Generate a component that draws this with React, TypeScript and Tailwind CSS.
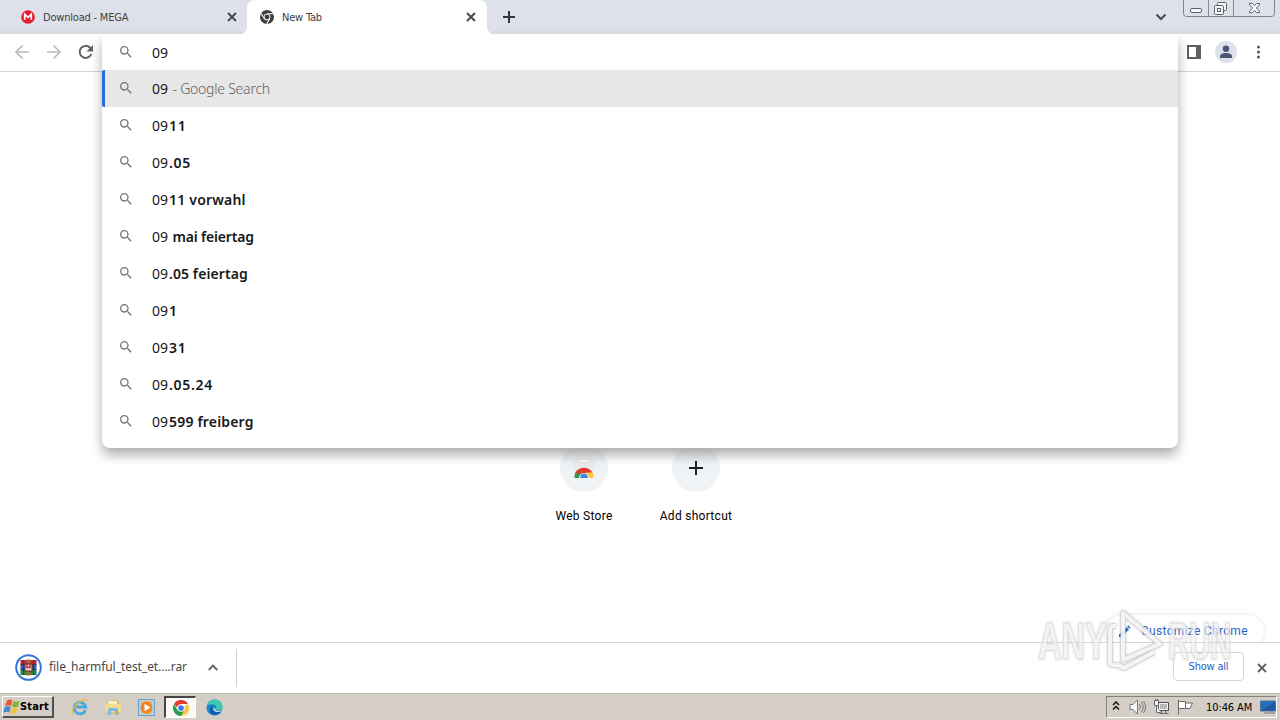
import type { ReactNode } from 'react'

const suggestions = [
  { typed: '09', rest: '11', tracking: 'tracking-[0.8px]' },
  { typed: '09', rest: '.05', tracking: 'tracking-[0.7px]' },
  { typed: '09', rest: '11 vorwahl', tracking: 'tracking-[0.2px]' },
  { typed: '09', rest: ' mai feiertag', tracking: 'tracking-[-0.18px]' },
  { typed: '09', rest: '.05 feiertag', tracking: 'tracking-[0.08px]' },
  { typed: '09', rest: '1', tracking: 'tracking-[0.8px]' },
  { typed: '09', rest: '31', tracking: 'tracking-[0.8px]' },
  { typed: '09', rest: '.05.24', tracking: 'tracking-[0.7px]' },
  { typed: '09', rest: '599 freiberg', tracking: 'tracking-[0.18px]' },
]

const SearchIcon = () => (
  <svg
    viewBox="0 0 24 24"
    className="ml-[13px] h-4 w-4 shrink-0"
    fill="#757575"
  >
    <path d="M15.5 14h-.79l-.28-.27A6.47 6.47 0 0 0 16 9.5 6.5 6.5 0 1 0 9.5 16c1.61 0 3.09-.59 4.23-1.57l.27.28v.79l5 4.99L20.49 19l-4.99-5zm-6 0a4.5 4.5 0 1 1 0-9 4.5 4.5 0 0 1 0 9z" />
  </svg>
)

const CloseIcon = ({ size, color }: { size: number; color: string }) => (
  <svg width={size} height={size} viewBox="0 0 10 10" stroke={color} strokeWidth="1.9">
    <path d="M1 1l8 8M9 1L1 9" />
  </svg>
)

const ChromeLogo = ({ size, mono }: { size: number; mono?: boolean }) => (
  <svg width={size} height={size} viewBox="0 0 48 48" className="shrink-0">
    <circle cx="24" cy="24" r="24" fill={mono ? '#3c4043' : '#fff'} />
    {!mono && (
      <>
        <path d="M24 24L3.2 12A24 24 0 0 1 44.8 12H24z" fill="#e33b2e" />
        <path d="M24 24L44.8 12A24 24 0 0 1 24 48l10.4-18z" fill="#fcc934" />
        <path d="M3.2 12A24 24 0 0 0 24 48l10.4-18H13.6z" fill="#2a9c4b" />
        <path d="M3.2 12h20.8v12H13.6z" fill="#e33b2e" />
      </>
    )}
    {mono && (
      <path
        d="M24 13h21M14.5 29.5L4 12M33.5 29.5L23 48"
        stroke="#fff"
        strokeWidth="3.5"
      />
    )}
    <circle cx="24" cy="24" r="11.5" fill="#fff" />
    <circle cx="24" cy="24" r="8.5" fill={mono ? '#3c4043' : '#3b7ded'} />
  </svg>
)

const TabStrip = () => (
  <header className="flex h-[34px] shrink-0 bg-[linear-gradient(#dee1e9_0,#dee1e9_28px,#d6d9df_34px)]">
    <div className="flex h-full w-[247px] items-center pl-[21px] pr-[10px]">
      <svg width="14" height="14" viewBox="0 0 15 15">
        <circle cx="7.5" cy="7.5" r="7.3" fill="#e21b2d" />
        <path
          d="M4 10.5v-6l3.5 3.3L11 4.500v6"
          fill="none"
          stroke="#fff"
          strokeWidth="1.9"
        />
      </svg>
      <span className="ml-2 flex-1 whitespace-nowrap pt-0.5 text-[11px] tracking-[-0.2px] text-[#3c4043]">
        Download - MEGA
      </span>
      <CloseIcon size={10} color="#45494e" />
    </div>
    <div className="relative flex h-full w-60 items-center rounded-t-lg bg-white pl-[13px] pr-[11px]">
      <span className="absolute bottom-0 -left-2 h-2 w-2 bg-[radial-gradient(circle_at_0_0,transparent_8px,white_8.5px)]" />
      <span className="absolute bottom-0 -right-2 h-2 w-2 bg-[radial-gradient(circle_at_100%_0,transparent_8px,white_8.5px)]" />
      <ChromeLogo size={14} mono />
      <span className="ml-2 flex-1 whitespace-nowrap pt-0.5 text-[11px] tracking-[-0.2px] text-[#3c4043]">
        New Tab
      </span>
      <CloseIcon size={10} color="#45494e" />
    </div>
    <div className="flex flex-1 items-center pl-4">
      <svg width="12" height="12" viewBox="0 0 12 12" stroke="#303338" strokeWidth="2">
        <path d="M6 0v12M0 6h12" />
      </svg>
    </div>
    <svg
      className="mr-[15px] mt-[13px]"
      width="12"
      height="8"
      viewBox="0 0 12 8"
      fill="none"
      stroke="#45494e"
      strokeWidth="2"
    >
      <path d="M1.500 1.500L6 6l4.500-4.500" />
    </svg>
    <svg
      className="mr-1"
      width="94"
      height="18"
      viewBox="0 0 94 18"
      fill="none"
      stroke="#5d6269"
    >
      <path d="M1.500 0v13.500q0 3 3 3h85q3 0 3-3V0" fill="#dee1e9" stroke="#7e848d" />
      <path d="M26.500 0v16M51.500 0v16" stroke="#858b94" />
      <rect x="8.500" y="8.500" width="11" height="4" rx="1.500" fill="#f5f7fa" />
      <rect x="35.500" y="2.500" width="9" height="8" rx="1" fill="#f5f7fa" />
      <rect x="32.500" y="5.500" width="9" height="9" rx="1" fill="#f5f7fa" />
      <rect x="35.500" y="8.500" width="3" height="3" />
      <path
        d="M67.500 3.500h3l2 2.200 2-2.200h3v1.600L74.300 8l3.200 3v1.600h-3l-2-2.200-2 2.200h-3V11l3.200-3-3.200-2.900z"
        fill="#f5f7fa"
      />
    </svg>
  </header>
)

const Toolbar = () => (
  <nav className="flex h-[38px] shrink-0 items-center border-b border-[#d5d7da] bg-white pb-px pl-[14px] pr-[13px]">
    <svg width="80" height="16" viewBox="0 0 80 16" fill="none" strokeWidth="1.7">
      <path d="M15 8H2M8.500 1.500L2 8l6.500 6.500" stroke="#b9bbbe" />
      <path d="M33 8h13M39.500 1.500L46 8l-6.500 6.500" stroke="#b9bbbe" />
      <path d="M77.300 10a6 6 0 1 1-1.300-6.300L77.500 5.500" stroke="#5f6368" strokeWidth="2" />
      <path d="M79 1v6.500h-6.500z" fill="#5f6368" />
    </svg>
    <div className="flex-1" />
    <svg width="14" height="14" viewBox="0 0 14 14" className="mr-[14px]">
      <path d="M1 1h12v12H1z" fill="#fff" stroke="#5f6062" strokeWidth="2" />
      <path d="M9 1h5v12H9z" fill="#5f6062" />
    </svg>
    <svg width="22" height="22" viewBox="0 0 22 22" className="mr-[14px]">
      <circle cx="11" cy="11" r="11" fill="#dde1e9" />
      <circle cx="11" cy="7.800" r="3.200" fill="#4c5672" />
      <path d="M5 17v-1.800c0-2.200 3-3.200 6-3.200s6 1 6 3.200V17z" fill="#4c5672" />
    </svg>
    <svg width="16" height="14" viewBox="0 0 16 14" fill="#55585c">
      <circle cx="7.500" cy="2" r="1.500" />
      <circle cx="7.500" cy="7" r="1.500" />
      <circle cx="7.500" cy="12" r="1.500" />
    </svg>
  </nav>
)

const Omnibox = () => (
  <div className="absolute left-[102px] top-[34px] z-20 w-[1076px] rounded-b-lg bg-white pb-2 font-['Noto_Sans',sans-serif] text-[14px] text-[#17181a] shadow-[0_7px_12px_rgba(0,0,0,0.32)] [clip-path:inset(0_-30px_-30px_-30px)]">
    <div className="flex h-9 items-center border-l-[3px] border-white">
      <SearchIcon />
      <span className="ml-[18px] pt-px">09</span>
    </div>
    <div className="flex h-[37px] items-center rounded-l-[2px] border-l-[3px] border-[#2b6bdc] bg-[#e7e7e7] pb-0.5">
      <SearchIcon />
      <span className="ml-[18px] whitespace-pre pt-px font-light tracking-[-0.23px]">
        <span className="font-normal tracking-normal">09</span>
        <span className="ml-px text-[#606266]"> - Google Search</span>
      </span>
    </div>
    {suggestions.map((item) => (
      <div
        key={item.rest}
        className="flex h-[37px] items-center border-l-[3px] border-white pb-0.5"
      >
        <SearchIcon />
        <span className="ml-[18px] whitespace-pre pt-px">
          {item.typed}
          <span className={`ml-px font-semibold ${item.tracking}`}>{item.rest}</span>
        </span>
      </div>
    ))}
  </div>
)

const Shortcut = ({ label, children }: { label: string; children: ReactNode }) => (
  <div className="flex w-28 flex-col items-center">
    <div className="flex h-12 w-12 items-center justify-center rounded-full bg-[#f0f3f5]">
      {children}
    </div>
    <span className="mt-[14px] whitespace-nowrap font-[Roboto] text-[12px] leading-5 tracking-[0.29px] text-black">
      {label}
    </span>
  </div>
)

const NewTabPage = () => (
  <main className="relative flex flex-1 justify-center overflow-hidden bg-white pt-[372px]">
    <Shortcut label="Web Store">
      <svg width="24" height="24" viewBox="0 0 24 24">
        <path d="M1 3h22v12H1z" fill="#e9ebed" />
        <path d="M7 4h10v2H7z" fill="#fafafa" />
        <path d="M2.500 22a9.500 9.500 0 0 1 4.500-9l5 9z" fill="#2e9549" />
        <path d="M3.500 16.500a10 10 0 0 1 17 0L15 18H8z" fill="#e23b30" />
        <path d="M14 16.500h6.500a9.500 9.500 0 0 1 1 5.500h-8.500z" fill="#fbc832" />
        <path d="M7 22a5 5 0 0 1 10 0z" fill="#fff" />
        <path d="M8 22a4 4.500 0 0 1 8 0z" fill="#4285e8" />
      </svg>
    </Shortcut>
    <Shortcut label="Add shortcut">
      <svg width="14" height="14" viewBox="0 0 14 14" stroke="#202124" strokeWidth="2">
        <path d="M7 0v14M0 7h14" />
      </svg>
    </Shortcut>
    <button className="absolute left-[1106px] top-[543px] flex h-8 w-[158px] items-center rounded-full bg-white pl-3 shadow-[0_0_5px_rgba(0,0,0,0.12)]">
      <svg width="13" height="13" viewBox="0 0 13 13" fill="#2965c8">
        <path d="M1 12v-2.500L8.500 2 11 4.500 3.500 12zM9.200 1.300l1-1 2.500 2.500-1 1z" />
      </svg>
      <span className="ml-[10px] whitespace-nowrap font-[Roboto] text-[12px] tracking-[0.3px] text-[#2965c8]">
        Customize Chrome
      </span>
    </button>
  </main>
)

const DownloadShelf = () => (
  <section className="flex h-[51px] shrink-0 items-center border-t border-[#d5d7da] bg-white pb-px pl-[15px] pr-[13px]">
    <svg width="27" height="27" viewBox="0 0 27 27">
      <circle cx="13.500" cy="13.500" r="12.300" fill="#fff" stroke="#3474d5" strokeWidth="2" />
      <path d="M5.500 6h16v5h-16z" fill="#b02c42" />
      <path d="M5.500 11h16v5h-16z" fill="#315cae" />
      <path d="M5.500 16h16v5h-16z" fill="#288347" />
      <path d="M11.500 5.500h4v16h-4z" fill="#a66b38" />
      <path d="M10 10h7v7h-7z" fill="#e7dccb" stroke="#5e3020" />
      <path d="M12 9.500v4h3v-4" fill="none" stroke="#bc2832" strokeWidth="1.500" />
      <path d="M5.500 10.500h4M5.500 15.500h4M17.500 10.500h4M17.500 15.500h4M8.500 6v15M18.500 6v15" stroke="#282838" strokeOpacity=".6" />
    </svg>
    <span className="ml-[7px] w-[138px] whitespace-nowrap pb-px font-['Noto_Sans',sans-serif] text-[12px] tracking-[-0.06px] text-[#45474b]">
      file_harmful_test_et....rar
    </span>
    <svg
      className="ml-[21px]"
      width="10"
      height="7"
      viewBox="0 0 10 7"
      fill="none"
      stroke="#5f6368"
      strokeWidth="1.900"
    >
      <path d="M.8 6L5 1.600 9.200 6" />
    </svg>
    <div className="ml-[18px] h-[38px] w-px bg-[#d0d2d5]" />
    <div className="flex-1" />
    <button className="mb-[2px] h-[29px] w-[71px] rounded border border-[#d5d7da] pt-px text-[11px] tracking-[-0.2px] text-[#2663c5]">
      Show all
    </button>
    <div className="ml-[13px]">
      <CloseIcon size={10} color="#5f6368" />
    </div>
  </section>
)

const Taskbar = () => (
  <footer className="flex h-[27px] shrink-0 items-center border-t border-[#b9bab5] bg-[#d4cec6] pl-[2px] pr-[3px]">
    <button className="flex h-[22px] w-[52px] items-center border border-b-2 border-r-2 border-b-[#515151] border-l-white border-r-[#515151] border-t-white">
      <svg width="17" height="16" viewBox="0 0 17 16" className="shrink-0">
        <path d="M4 1.500q3-2 5.500 0L8 7q-3-1.500-6 .5z" fill="#e9582f" />
        <path d="M10.500 2q3 1.500 6 0L15 7.500q-3 1.500-6 0z" fill="#7eb33d" />
        <path d="M1.700 8.500q3-2 6-.5l-1.500 5.500q-3-1.500-6 .5z" fill="#4388cf" />
        <path d="M8.700 8.500q3 1.500 6 0l-1.500 5.500q-3 1.500-6 0z" fill="#f4c23e" />
      </svg>
      <span className="pt-px text-[11px] font-bold tracking-[0.15px] text-black">Start</span>
    </button>
    <svg className="ml-[17px]" width="18" height="20" viewBox="0 0 20 20" fill="none">
      <path d="M16 13.500A6.400 6.400 0 1 1 16.300 10H6" stroke="#48a8df" strokeWidth="3.200" />
      <path d="M2 17.500C-1 11 14-1 18.500 2.500" stroke="#e6bd46" strokeWidth="1.500" />
    </svg>
    <svg className="ml-[15px]" width="18" height="18" viewBox="0 0 18 18">
      <path d="M2 3h5l1-1h7v3h1v11H2z" fill="#dfc36c" />
      <path d="M4 3h9v3H4z" fill="#f7efc8" />
      <path d="M1 6h16v8H1z" fill="#f1dc91" />
      <path d="M4 17v-5q0-2 2-2h6q2 0 2 2v5h-3v-4H7v4z" fill="#7dbbdc" />
    </svg>
    <svg className="ml-4" width="17" height="17" viewBox="0 0 17 17">
      <path d="M.5.5h16v16H.5z" fill="#b4d3eb" stroke="#6ba0cc" />
      <path d="M3 2h11v13H3z" fill="#f0b86e" />
      <circle cx="8.500" cy="8.500" r="6" fill="#ef8623" />
      <path d="M6.500 4.800l6 3.700-6 3.700z" fill="#fff" />
    </svg>
    <div className="ml-[9px] flex h-[22px] w-8 items-center justify-center border border-l-2 border-t-2 border-b-white border-l-[#454545] border-r-white border-t-[#454545] bg-[#fbfaf8]">
      <ChromeLogo size={16} />
    </div>
    <svg className="ml-[10px]" width="17" height="17" viewBox="0 0 18 18">
      <circle cx="9" cy="9" r="8.500" fill="#1887ce" />
      <path d="M1 7C2-1 17-2 17.500 8c0 4-5 5-7 3 2-3-1-6-4-5.500Q3 5.500 1 7z" fill="#42c9ad" />
      <path d="M7 8c-2 5 3 8 9 5-4 6-13 4-12-2q.5-3 3-3z" fill="#125aa3" />
      <path d="M10 11c2 3 6 1.500 7.500-.5L16 13c-4 2-8 0-8-3q1-2 2 1z" fill="#e1eef0" />
    </svg>
    <div className="flex-1" />
    <div className="flex h-[22px] w-[171px] items-center border border-b-white border-l-[#858078] border-r-white border-t-[#858078] pl-[5px]">
      <svg className="mb-0.5" width="8" height="10" viewBox="0 0 8 10" fill="none" stroke="#151515" strokeWidth="1.500">
        <path d="M1 4l3-3 3 3M1 8.500l3-3 3 3" />
      </svg>
      <svg className="ml-[9px]" width="17" height="16" viewBox="0 0 17 16" fill="none" stroke="#77787a">
        <path d="M1 5.500h3L8.500 1v14L4 10.500H1z" fill="#f8f8f8" />
        <path d="M10.500 5q2 3 0 6M12.500 3q3.500 5 0 10M14.500 2q4 6 0 12" />
      </svg>
      <svg className="ml-[7px]" width="17" height="16" viewBox="0 0 17 16" fill="none" stroke="#68696b">
        <path d="M5.500 3.500h10v8h-10z" fill="#b8babc" stroke="#4f5052" />
        <path d="M6.500 4.500h8v6h-8z" stroke="#f4f4f2" />
        <path d="M1.500 1.500h4v5h-4zM2.500 0v2M4.500 0v2M3.500 6.500v7h4" fill="#f7f7f5" />
        <path d="M8.500 12v2M12.500 12v2M6.500 14.500h9" />
      </svg>
      <svg className="ml-[7px]" width="17" height="16" viewBox="0 0 17 16" fill="#fff" stroke="#68696b">
        <path d="M1.500 1v14.500M1.500 2.500h7v7h-7M8.500 4h7l-2.500 5.500H8.500" />
      </svg>
      <span className="ml-[12px] w-[49px] whitespace-nowrap pt-0.5 text-[11px] tracking-[-0.1px] text-black">
        10:46 AM
      </span>
      <svg className="ml-[5px]" width="16" height="14" viewBox="0 0 16 14">
        <path d="M.5 1h15v10H.5z" fill="#266bc4" stroke="#4d7394" />
        <path d="M1 10.500L15 2v8.500z" fill="#2355a0" />
        <path d="M4 13h11" stroke="#777" />
      </svg>
    </div>
  </footer>
)

const Watermark = () => (
  <div className="pointer-events-none absolute left-[1038px] top-[608px] z-30 flex h-16 w-[196px] items-center font-['Liberation_Sans',sans-serif] text-[51px] font-bold leading-none text-white/60 [-webkit-text-stroke:1px_rgba(205,205,205,0.6)] [filter:drop-shadow(0_0_1.5px_rgba(110,110,110,0.35))]">
    <span className="w-[66px] origin-left scale-x-[0.64] pt-0.5">ANY</span>
    <svg className="shrink-0" width="64" height="64" viewBox="0 0 64 64" fill="none" strokeLinejoin="round">
      <g stroke="#c4c4c4" strokeOpacity=".5" strokeWidth="6">
        <path d="M19 5v47L56 36z" />
        <path d="M12 18H9q-3 0-3 4v31q0 4 3 4h5l6 3 30-16" />
      </g>
      <g stroke="#fff" strokeOpacity=".8" strokeWidth="4">
        <path d="M19 5v47L56 36z" />
        <path d="M12 18H9q-3 0-3 4v31q0 4 3 4h5l6 3 30-16" />
      </g>
    </svg>
    <span className="w-[64px] origin-left scale-x-[0.575] pt-0.5">RUN</span>
  </div>
)

const App = () => (
  <div className="relative flex h-[720px] w-[1280px] flex-col overflow-hidden bg-white font-['DejaVu_Sans_Condensed','DejaVu_Sans',sans-serif]">
    <TabStrip />
    <Toolbar />
    <NewTabPage />
    <DownloadShelf />
    <Taskbar />
    <Omnibox />
    <Watermark />
  </div>
)

export default App
